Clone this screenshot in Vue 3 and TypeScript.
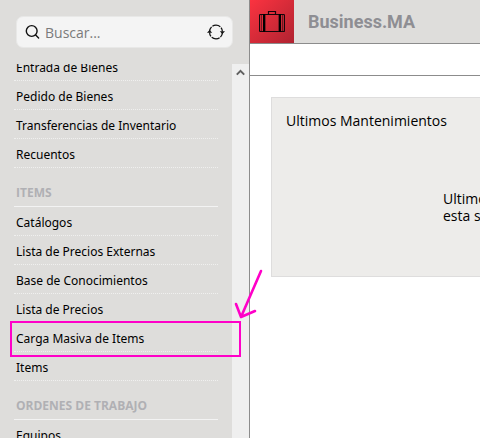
<script setup lang="ts">
interface MenuSection {
  title?: string
  items: string[]
}

const sections: MenuSection[] = [
  { items: ['Entrada de Bienes', 'Pedido de Bienes', 'Transferencias de Inventario', 'Recuentos'] },
  {
    title: 'ITEMS',
    items: [
      'Catálogos',
      'Lista de Precios Externas',
      'Base de Conocimientos',
      'Lista de Precios',
      'Carga Masiva de Items',
      'Items',
    ],
  },
  { title: 'ORDENES DE TRABAJO', items: ['Equipos'] },
]
</script>

<template>
  <div class="app">
    <aside class="sidebar">
      <form class="search" @submit.prevent>
        <label for="menu-search" class="search-label" aria-label="Buscar">
          <svg width="16" height="16" viewBox="0 0 16 16" fill="none" stroke="#111" stroke-width="1.4" stroke-linecap="round">
            <circle cx="6.7" cy="7" r="5.4" />
            <path d="M10.7 11L13.6 13.9" />
          </svg>
        </label>
        <input id="menu-search" type="text" placeholder="Buscar..." />
        <button type="button" class="refresh" aria-label="Actualizar">
          <svg width="18" height="16" viewBox="0 0 18 16" fill="none" stroke="#111" stroke-width="1.3">
            <path d="M2.6 7.5A6.4 6.4 0 0 1 15.4 7.5" stroke-dasharray="5 1 8.4 1 6" />
            <path d="M15.4 8.5A6.4 6.4 0 0 1 2.6 8.5" stroke-dasharray="5 1 8.4 1 6" />
            <path d="M0 8.8L2.6 6L5.2 8.8ZM12.8 7.2H18L15.4 10Z" fill="#111" stroke="none" />
          </svg>
        </button>
      </form>

      <div class="menu">
        <nav class="menu-list">
          <section v-for="(section, i) in sections" :key="i">
            <h2 v-if="section.title">{{ section.title }}</h2>
            <ul>
              <li v-for="item in section.items" :key="item">
                <a href="#">{{ item }}</a>
              </li>
            </ul>
          </section>
        </nav>
        <div class="scrollbar">
          <button type="button" aria-label="Subir">
            <svg width="9" height="7" viewBox="0 0 9 7" fill="none" stroke="#606060" stroke-width="2">
              <path d="M0.8 5.6L4.5 1.9L8.2 5.6" />
            </svg>
          </button>
        </div>
      </div>
    </aside>

    <main class="content">
      <header class="topbar">
        <span class="logo">
          <svg width="26" height="22" viewBox="0 0 26 22" fill="none" stroke="#14060a">
            <path d="M9.5 3V0.5H16.5V3" stroke-width="1.2" />
            <rect x="0.5" y="3.5" width="25" height="17" rx="1" stroke-width="1.2" />
            <path d="M2.5 4V20M23.5 4V20" stroke-width="0.5" />
            <path d="M5 3V21M21 3V21" stroke-width="2" stroke="#000" />
            <path d="M6.5 4V20M19.5 4V20" stroke-width="0.4" />
          </svg>
        </span>
        <h1>Business.MA</h1>
      </header>
      <div class="toolbar"></div>
      <section class="panel">
        <h2>Ultimos Mantenimientos</h2>
        <p>Ultimo<br />esta s</p>
      </section>
    </main>

    <svg class="callout" width="256" height="92" viewBox="0 0 256 92" fill="none" stroke="#ff00c8" aria-hidden="true">
      <rect x="1" y="54" width="229" height="34" stroke-width="2" />
      <path d="M251 3L231 49M226 36L231 49L245 43" stroke-width="2.6" stroke-linecap="round" stroke-linejoin="round" />
    </svg>
  </div>
</template>

<style>
body {
  margin: 0;
}
</style>

<style scoped>
.app {
  position: relative;
  display: grid;
  grid-template-columns: 250px minmax(0, 1fr);
  height: 100vh;
  overflow: hidden;
  background: #fff;
  color: #000;
  font-family: 'Noto Sans', 'Open Sans', sans-serif;
}

.sidebar {
  display: flex;
  flex-direction: column;
  min-height: 0;
  border-right: 1px solid #8c8c8c;
  background: #dedddb;
}

.search {
  display: flex;
  align-items: center;
  box-sizing: border-box;
  height: 32px;
  margin: 16px 16px;
  padding: 0 7px 0 8px;
  border: 1px solid #e8e8e7;
  border-radius: 7px;
  background: #f4f4f4;
}

.search-label,
.refresh {
  display: flex;
}

.search input {
  flex: 1;
  min-width: 0;
  padding: 0 0 0 4px;
  border: 0;
  outline: 0;
  background: transparent;
  font-family: 'Open Sans', sans-serif;
  font-size: 14px;
}

.search input::placeholder {
  color: #7b7b7b;
  opacity: 1;
}

button {
  padding: 0;
  border: 0;
  background: transparent;
}

.menu {
  display: flex;
  flex: 1;
  min-height: 0;
}

.menu-list {
  flex: 1;
  overflow: hidden;
  padding: 0 14px;
}

.menu-list section:first-child {
  margin-top: -12px;
}

ul {
  margin: 0;
  padding: 0;
  list-style: none;
}

li {
  border-bottom: 1px dotted #f0f0ef;
}

li a {
  display: block;
  padding: 4px 2px 0;
  color: #000;
  font-size: 12px;
  line-height: 24px;
  text-decoration: none;
  white-space: nowrap;
}

.menu-list h2 {
  margin: 0;
  padding: 12px 2px 0;
  border-bottom: 1px solid #f3f3f3;
  color: #b0b0b4;
  font-family: 'Open Sans', sans-serif;
  font-size: 12px;
  font-weight: 700;
  line-height: 26px;
}

.scrollbar {
  width: 17px;
  background: #efefef;
}

.scrollbar button {
  display: flex;
  align-items: center;
  justify-content: center;
  width: 100%;
  height: 17px;
}

.topbar {
  display: flex;
  align-items: center;
  height: 43px;
  border-bottom: 1px solid #8c8c8c;
  background: #dedddb;
}

.logo {
  display: flex;
  align-items: center;
  justify-content: center;
  width: 44px;
  height: 100%;
  background: linear-gradient(135deg, #fb3340, #b02331);
}

.topbar h1 {
  margin: 0;
  padding-left: 14px;
  color: #8e8e93;
  font-family: Roboto, sans-serif;
  font-size: 18px;
  font-weight: 700;
  line-height: 24px;
}

.toolbar {
  height: 31px;
  border-bottom: 1px solid #8c8c8c;
}

.panel {
  box-sizing: border-box;
  min-height: 180px;
  margin: 21px 0 0 21px;
  padding: 14px 0 0 14px;
  border: 1px solid #dedddd;
  border-right: 0;
  background: #edecea;
  font-family: 'Open Sans', sans-serif;
  font-size: 14px;
}

.panel h2 {
  margin: 0;
  font-size: 14px;
  font-weight: 400;
  line-height: 18px;
}

.panel p {
  margin: 60px 0 0;
  padding-left: 157px;
  overflow: hidden;
  line-height: 17px;
  white-space: nowrap;
}

.callout {
  position: absolute;
  top: 268px;
  left: 10px;
  pointer-events: none;
}
</style>
